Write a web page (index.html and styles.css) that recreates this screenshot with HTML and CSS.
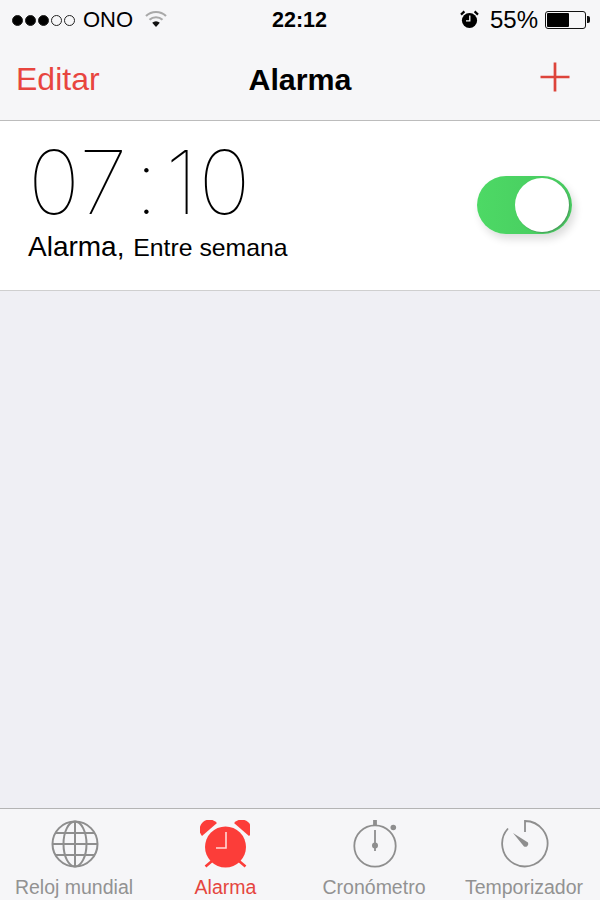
FILE: index.html
```html
<!DOCTYPE html>
<html lang="es">
<head>
    <meta charset="UTF-8">
    <meta name="viewport" content="width=device-width, initial-scale=1.0">
    <title>Alarma</title>
    <link rel="stylesheet" href="styles.css">
</head>
<body>
    <header class="top-bar">
        <div class="status-bar">
            <div class="status-left">
                <span class="signal">
                    <i class="dot full"></i><i class="dot full"></i><i class="dot full"></i><i class="dot"></i><i class="dot"></i>
                </span>
                <span class="carrier">ONO</span>
                <svg class="wifi" width="22" height="17" viewBox="0 0 22 17">
                    <path d="M1 6a14.500 14.500 0 0 1 20 0" fill="none" stroke="#a9a9a9" stroke-width="2.200"/>
                    <path d="M4.500 9.800a9.500 9.500 0 0 1 13 0" fill="none" stroke="#a9a9a9" stroke-width="2.200"/>
                    <path d="M7.200 12.800a5.500 5.500 0 0 1 7.600 0L11 17z" fill="#111"/>
                </svg>
            </div>
            <div class="clock">22:12</div>
            <div class="status-right">
                <svg class="status-alarm" width="19" height="19" viewBox="0 0 19 19">
                    <circle cx="9.500" cy="10.500" r="7.600" fill="#000"/>
                    <path d="M1 4.600 4.400 1.400M18 4.600 14.600 1.400" stroke="#000" stroke-width="2.200"/>
                    <path d="M9.800 5.500v5.400H6" fill="none" stroke="#fff" stroke-width="1.300"/>
                </svg>
                <span class="battery-text">55%</span>
                <span class="battery"><span class="battery-level"></span></span>
            </div>
        </div>
        <nav class="nav-bar">
            <a class="nav-edit">Editar</a>
            <h1>Alarma</h1>
            <svg class="nav-add" width="30" height="30" viewBox="0 0 30 30">
                <path d="M15 0.500v29M0.500 15h29" stroke="#dd443b" stroke-width="2.700"/>
            </svg>
        </nav>
    </header>

    <main class="alarm-list">
        <div class="alarm-row">
            <div class="alarm-info">
                <div class="alarm-time">07<span class="colon">:</span>10</div>
                <div class="alarm-label">Alarma, <small>Entre semana</small></div>
            </div>
            <div class="switch"><span class="switch-knob"></span></div>
        </div>
    </main>

    <footer class="tab-bar">
        <div class="tab">
            <svg width="50" height="50" viewBox="0 0 50 50" fill="none" stroke="#8e8e8e" stroke-width="2">
                <circle cx="25" cy="24" r="22.500"/>
                <ellipse cx="25" cy="24" rx="11.500" ry="22.500"/>
                <path d="M25 1.500v45M2.500 24h45M6 13h38M6 35h38"/>
            </svg>
            <span>Reloj mundial</span>
        </div>
        <div class="tab active">
            <svg width="50" height="50" viewBox="0 0 50 50">
                <circle cx="25.500" cy="27" r="20.500" fill="#fc3d39"/>
                <path d="M2 16A9.500 9.500 0 0 1 17 3z" fill="#fc3d39"/>
                <path d="M49 16A9.500 9.500 0 0 0 34 3z" fill="#fc3d39"/>
                <path d="M5.500 46.500 12 41M45.500 46.500 39 41" stroke="#fc3d39" stroke-width="2.600"/>
                <path d="M26 12v16H16" fill="none" stroke="#ffd9d6" stroke-width="1.600"/>
            </svg>
            <span>Alarma</span>
        </div>
        <div class="tab">
            <svg width="50" height="50" viewBox="0 0 50 50" fill="none" stroke="#8e8e8e" stroke-width="1.800">
                <circle cx="25" cy="26" r="20.700"/>
                <path d="M25 0v5" stroke-width="3.800"/>
                <circle cx="43.300" cy="7.500" r="2.800" fill="#8e8e8e" stroke="none"/>
                <path d="M25 10v21" stroke-width="1.800"/>
                <circle cx="25" cy="25.500" r="3" fill="#8e8e8e" stroke="none"/>
            </svg>
            <span>Cronómetro</span>
        </div>
        <div class="tab">
            <svg width="50" height="50" viewBox="0 0 50 50" fill="none" stroke="#8e8e8e" stroke-width="1.800">
                <path d="M25 12V1A22.700 22.700 0 1 1 8 8.500"/>
                <path d="M13 13 28 22.500a3 3 0 0 1-4 4z" fill="#8e8e8e" stroke="none"/>
            </svg>
            <span>Temporizador</span>
        </div>
    </footer>
</body>
</html>
```

FILE: styles.css
```css
body {
    margin: 0;
    width: 600px;
    height: 900px;
    display: flex;
    flex-direction: column;
    overflow: hidden;
    background-color: #efeff4;
    font-family: "Liberation Sans", Arial, sans-serif;
    color: #000;
}

/* Status bar and navigation */
.top-bar {
    height: 120px;
    background-color: #f6f6f8;
    border-bottom: 1px solid #bcbcbc;
}

.status-bar {
    height: 40px;
    padding: 0 10px 0 12px;
    display: grid;
    grid-template-columns: 1fr auto 1fr;
    align-items: center;
    font-size: 22px;
}

.status-left,
.status-right {
    display: flex;
    align-items: center;
}

.status-right {
    justify-content: flex-end;
}

.signal {
    display: flex;
    gap: 2px;
}

.dot {
    width: 9px;
    height: 9px;
    border: 1px solid #222;
    border-radius: 50%;
}

.dot.full {
    background-color: #000;
}

.carrier {
    margin-left: 8px;
}

.wifi {
    margin-left: 12px;
    margin-top: -4px;
}

.clock {
    font-size: 21.500px;
    font-weight: bold;
    margin-right: 3px;
}

.status-alarm {
    margin-right: 11px;
    margin-top: -2px;
}

.battery-text {
    font-size: 24px;
    margin-right: 7px;
}

.battery {
    position: relative;
    width: 37px;
    height: 14px;
    padding: 1px;
    border: 1px solid #111;
    border-radius: 3px;
    margin-right: 4px;
}

.battery::after {
    content: "";
    position: absolute;
    right: -5px;
    top: 4px;
    width: 3px;
    height: 7px;
    background-color: #111;
    border-radius: 0 2px 2px 0;
}

.battery-level {
    display: block;
    width: 22px;
    height: 100%;
    background-color: #000;
    border-radius: 1px;
}

.nav-bar {
    height: 78px;
    padding: 0 30px 2px;
    display: grid;
    grid-template-columns: 1fr auto 1fr;
    align-items: center;
}

.nav-edit {
    font-size: 32px;
    color: #e8453f;
    margin-left: -14px;
}

.nav-bar h1 {
    margin: 0;
    font-size: 30.400px;
    font-weight: bold;
}

.nav-add {
    justify-self: end;
    margin-top: -5px;
}

/* Alarm list */
.alarm-list {
    flex: 1;
}

.alarm-row {
    height: 169px;
    padding: 0 28px;
    display: flex;
    justify-content: space-between;
    align-items: center;
    background-color: #fff;
    border-bottom: 1px solid #cfcfcf;
}

.alarm-info {
    padding-bottom: 9px;
}

.alarm-time {
    font-family: Inter, sans-serif;
    font-weight: 100;
    font-size: 88px;
    line-height: 88px;
    letter-spacing: 1px;
}

.colon {
    margin: 0 6px;
}

.alarm-label {
    font-size: 28px;
    line-height: 34px;
    margin-top: 4px;
}

.alarm-label small {
    font-size: 24.800px;
    margin-left: 1px;
}

.switch {
    width: 95px;
    height: 58px;
    box-sizing: border-box;
    padding: 2px 3px;
    display: flex;
    justify-content: flex-end;
    border-radius: 29px;
    background: linear-gradient(to right, #4dd965, #47c95f);
    box-shadow: 3px 5px 9px rgba(0, 0, 0, 0.14);
    margin-top: -1px;
}

.switch-knob {
    width: 54px;
    height: 54px;
    background-color: #fff;
    border-radius: 50%;
    box-shadow: 1px 1px 1px #4a9e5c;
}

/* Bottom tabs */
.tab-bar {
    height: 92px;
    display: grid;
    grid-template-columns: repeat(4, 150px);
    background-color: #f6f6f8;
    border-top: 1px solid #b4b4b4;
    box-sizing: border-box;
}

.tab {
    display: flex;
    flex-direction: column;
    align-items: center;
    font-size: 19.500px;
    color: #929292;
    white-space: nowrap;
    padding-top: 11px;
}

.tab svg {
    display: block;
    margin-bottom: 6px;
}

.tab span {
    margin-right: 2px;
}

.tab.active {
    color: #e5463f;
}

.tab.active span {
    margin-right: -1px;
}
```
